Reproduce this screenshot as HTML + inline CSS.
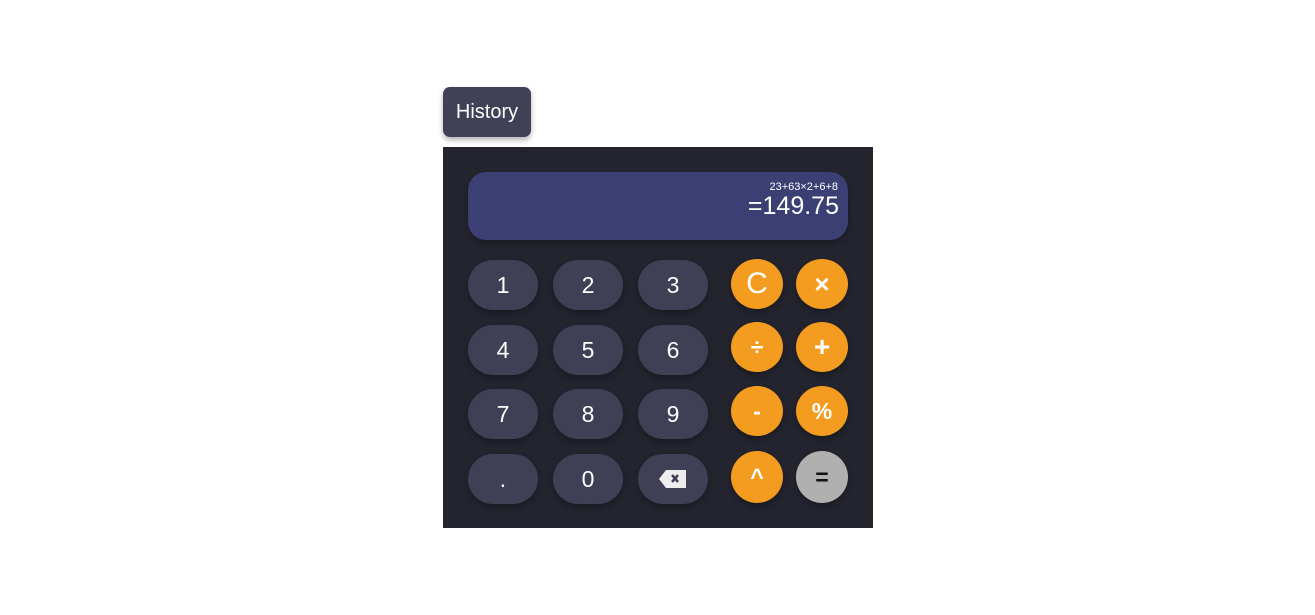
<!DOCTYPE html>
<html><head><style>
body{margin:0;width:1315px;height:615px;background:#fff;position:relative;font-family:"Liberation Sans",sans-serif;overflow:hidden}
.a{position:absolute}
#hist{left:443px;top:87px;width:88px;height:50px;background:#404157;border-radius:7px;color:#fff;font-size:20px;line-height:50px;text-align:center;box-shadow:0 3px 6px rgba(0,0,0,.3)}
#panel{left:443px;top:147px;width:430px;height:381px;background:#24242f}
#disp{left:468px;top:172px;width:380px;height:68px;background:#3b3f74;border-radius:18px;box-shadow:0 3px 6px rgba(0,0,0,.3);color:#fff;text-align:right}
.n{position:absolute;width:70px;height:50px;border-radius:25px;background:#3f4056;color:#fff;font-size:23px;line-height:50px;text-align:center;box-shadow:0 3px 6px rgba(0,0,0,.3)}
.o{position:absolute;width:52px;height:50px;border-radius:50%;background:#f39c1f;color:#fff;font-size:23px;line-height:50px;text-align:center;box-shadow:0 3px 6px rgba(0,0,0,.3);font-weight:bold}
</style></head><body>
<div class="a" id="hist">History</div>
<div class="a" id="panel"></div>
<div class="a" id="disp"><div style="font-size:11px;margin:9px 10px 0 0">23+63×2+6+8</div><div style="font-size:25px;margin:0 9px 0 0;line-height:26px">=149.75</div></div>
<div class="n" style="left:468px;top:260px">1</div>
<div class="n" style="left:553px;top:260px">2</div>
<div class="n" style="left:638px;top:260px">3</div>
<div class="n" style="left:468px;top:325px">4</div>
<div class="n" style="left:553px;top:325px">5</div>
<div class="n" style="left:638px;top:325px">6</div>
<div class="n" style="left:468px;top:389px">7</div>
<div class="n" style="left:553px;top:389px">8</div>
<div class="n" style="left:638px;top:389px">9</div>
<div class="n" style="left:468px;top:454px">.</div>
<div class="n" style="left:553px;top:454px">0</div>
<div class="n" style="left:638px;top:454px"><svg width="30" height="22" viewBox="0 0 30 22" style="position:absolute;left:20px;top:14px"><path d="M8 2H28V20H8L1 11Z" fill="#eee"/><path d="M14 7L20 14M20 7L14 14" stroke="#3f4056" stroke-width="2.5"/></svg></div>
<div class="o" style="left:731px;top:259px;font-size:30px;font-weight:normal">C</div>
<div class="o" style="left:796px;top:259px;font-size:26px">×</div>
<div class="o" style="left:731px;top:322px">÷</div>
<div class="o" style="left:796px;top:322px;font-size:28px">+</div>
<div class="o" style="left:731px;top:386px">-</div>
<div class="o" style="left:796px;top:386px">%</div>
<div class="o" style="left:731px;top:451px;height:52px;line-height:52px">^</div>
<div class="o" style="left:796px;top:451px;height:52px;line-height:52px;background:#b0b0b0;color:#111">=</div>
</body></html>
